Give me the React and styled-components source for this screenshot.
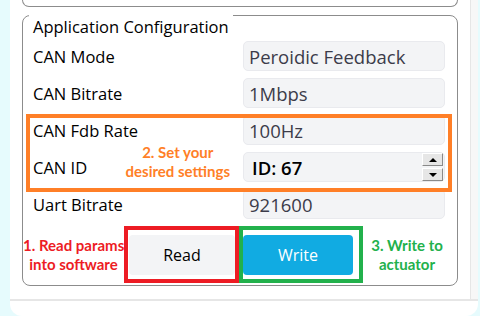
import React from 'react'
import styled, {createGlobalStyle} from 'styled-components'

const Global = createGlobalStyle`
  * { box-sizing: border-box; }
  html, body {
    margin: 0;
    padding: 0;
    background: #e6fbfd;
    overflow: hidden;
  }
  body {
    font-family: "Open Sans", "Noto Sans", sans-serif;
  }
`

const Card = styled.div`
  margin-left: 10px;
  width: 468px;
  height: 316px;
  background: #fff;
  border-radius: 0 0 12px 12px;
  display: flex;
  flex-direction: column;
  overflow: hidden;
`

const ScrollArea = styled.div`
  flex: 0 0 301px;
  display: flex;
  border-bottom: 2px solid #e6e6e6;
`

const Content = styled.div`
  flex: 1;
  padding: 0 12px;
  display: flex;
  flex-direction: column;
  overflow: hidden;
`

const Track = styled.div`
  width: 8px;
  background: #f7f7f7;
  border-left: 1px solid #e6e6e6;
`

const PrevGroup = styled.div`
  height: 7px;
  flex: 0 0 7px;
  border: 1px solid #8c8c8c;
  border-top: none;
  border-radius: 0 0 8px 8px;
  margin-bottom: 8px;
`

const Group = styled.div`
  border: 1px solid #8c8c8c;
  border-radius: 8px;
  display: flex;
  flex-direction: column;
  gap: 7px;
  padding-bottom: 2px;
`

const Title = styled.div`
  align-self: flex-start;
  margin: -1px 0 -5px 6px;
  padding: 0 4px;
  background: #fff;
  font-size: 16.5px;
  line-height: 24px;
  color: #000;
`

const Row = styled.div`
  display: grid;
  grid-template-columns: auto 1fr 202px;
  grid-template-rows: 30px;
  align-items: center;
  padding: 0 12px 0 10px;
`

const Label = styled.div`
  font-size: 16.5px;
  color: #000;
  white-space: nowrap;
`

const Field = styled.div`
  height: 30px;
  background: #f3f4f6;
  border: 1px solid #e9eaee;
  border-radius: 5px;
  display: flex;
  align-items: center;
  padding-left: ${p => (p.$strong ? '8px' : '5px')};
  font-size: 18.5px;
  color: ${p => (p.$strong ? '#000' : '#3c3c4a')};
  font-weight: ${p => (p.$strong ? 600 : 400)};
`

const FieldText = styled.span`
  flex: 1;
`

const Spinner = styled.div`
  display: flex;
  flex-direction: column;
  gap: 2px;
  margin-right: 1px;
`

const SpinButton = styled.div`
  width: 21px;
  height: 13px;
  background: #e6e6e6;
  border: 1px solid;
  border-color: #fff #8a8a8a #8a8a8a #fff;
  display: flex;
  align-items: center;
  justify-content: center;
  &::before {
    content: '';
    border-left: 4px solid transparent;
    border-right: 4px solid transparent;
    ${p => (p.$down ? 'border-top: 4px solid #000;' : 'border-bottom: 4px solid #000;')}
  }
`

const Highlight = styled.div`
  position: relative;
  display: flex;
  flex-direction: column;
  gap: 7px;
  &::after {
    content: '';
    position: absolute;
    top: -1px;
    bottom: -10px;
    left: 3px;
    right: 5px;
    border: 4px solid #ff7f27;
    z-index: 1;
    pointer-events: none;
  }
`

const Note = styled.div`
  font-family: Lato, "Open Sans", sans-serif;
  font-weight: 700;
  font-size: 15px;
  line-height: 19px;
  text-align: center;
  color: ${p => p.$color};
  width: ${p => p.$width || 'auto'};
  white-space: nowrap;
`

const SideNote = styled(Note)`
  justify-self: end;
  align-self: center;
  margin: -11px 13px 0 0;
`

const ActionRow = styled.div`
  display: flex;
  align-items: center;
`

const Frame = styled.div`
  display: flex;
  border: 4px solid ${p => p.$color};
  padding: 5px ${p => p.$right}px 4px ${p => p.$left}px;
`

const Button = styled.button`
  height: 40px;
  width: ${p => p.$width}px;
  border: none;
  border-radius: 4px;
  background: ${p => (p.$primary ? '#11abe2' : '#f3f4f6')};
  color: ${p => (p.$primary ? '#fff' : '#000')};
  font-family: "Open Sans", sans-serif;
  font-size: 16px;
  padding: 0;
`

const SettingRow = ({label, value, children}) => (
  <Row>
    <Label>{label}</Label>
    {children || <span />}
    <Field>
      <FieldText>{value}</FieldText>
    </Field>
  </Row>
)

export default function App() {
  return (
    <>
      <Global />
      <Card>
        <ScrollArea>
          <Content>
            <PrevGroup />
            <Group>
              <Title>Application Configuration</Title>
              <SettingRow label="CAN Mode" value="Peroidic Feedback" />
              <SettingRow label="CAN Bitrate" value="1Mbps" />
              <Highlight>
                <SettingRow label="CAN Fdb Rate" value="100Hz" />
                <Row>
                  <Label>CAN ID</Label>
                  <SideNote $color="#ff7f27">
                    2. Set your
                    <br />
                    desired settings
                  </SideNote>
                  <Field $strong>
                    <FieldText>ID: 67</FieldText>
                    <Spinner>
                      <SpinButton />
                      <SpinButton $down />
                    </Spinner>
                  </Field>
                </Row>
              </Highlight>
              <SettingRow label="Uart Bitrate" value="921600" />
              <ActionRow>
                <Note $color="#ed1c24" $width="101px">
                  1. Read params
                  <br />
                  into software
                </Note>
                <Frame $color="#ed1c24" $left={1} $right={0}>
                  <Button $width={106}>Read</Button>
                </Frame>
                <Frame $color="#22b14c" $left={0} $right={6}>
                  <Button $primary $width={110}>Write</Button>
                </Frame>
                <Note $color="#22b14c" $width="88px">
                  3. Write to
                  <br />
                  actuator
                </Note>
              </ActionRow>
            </Group>
          </Content>
          <Track />
        </ScrollArea>
      </Card>
    </>
  )
}
